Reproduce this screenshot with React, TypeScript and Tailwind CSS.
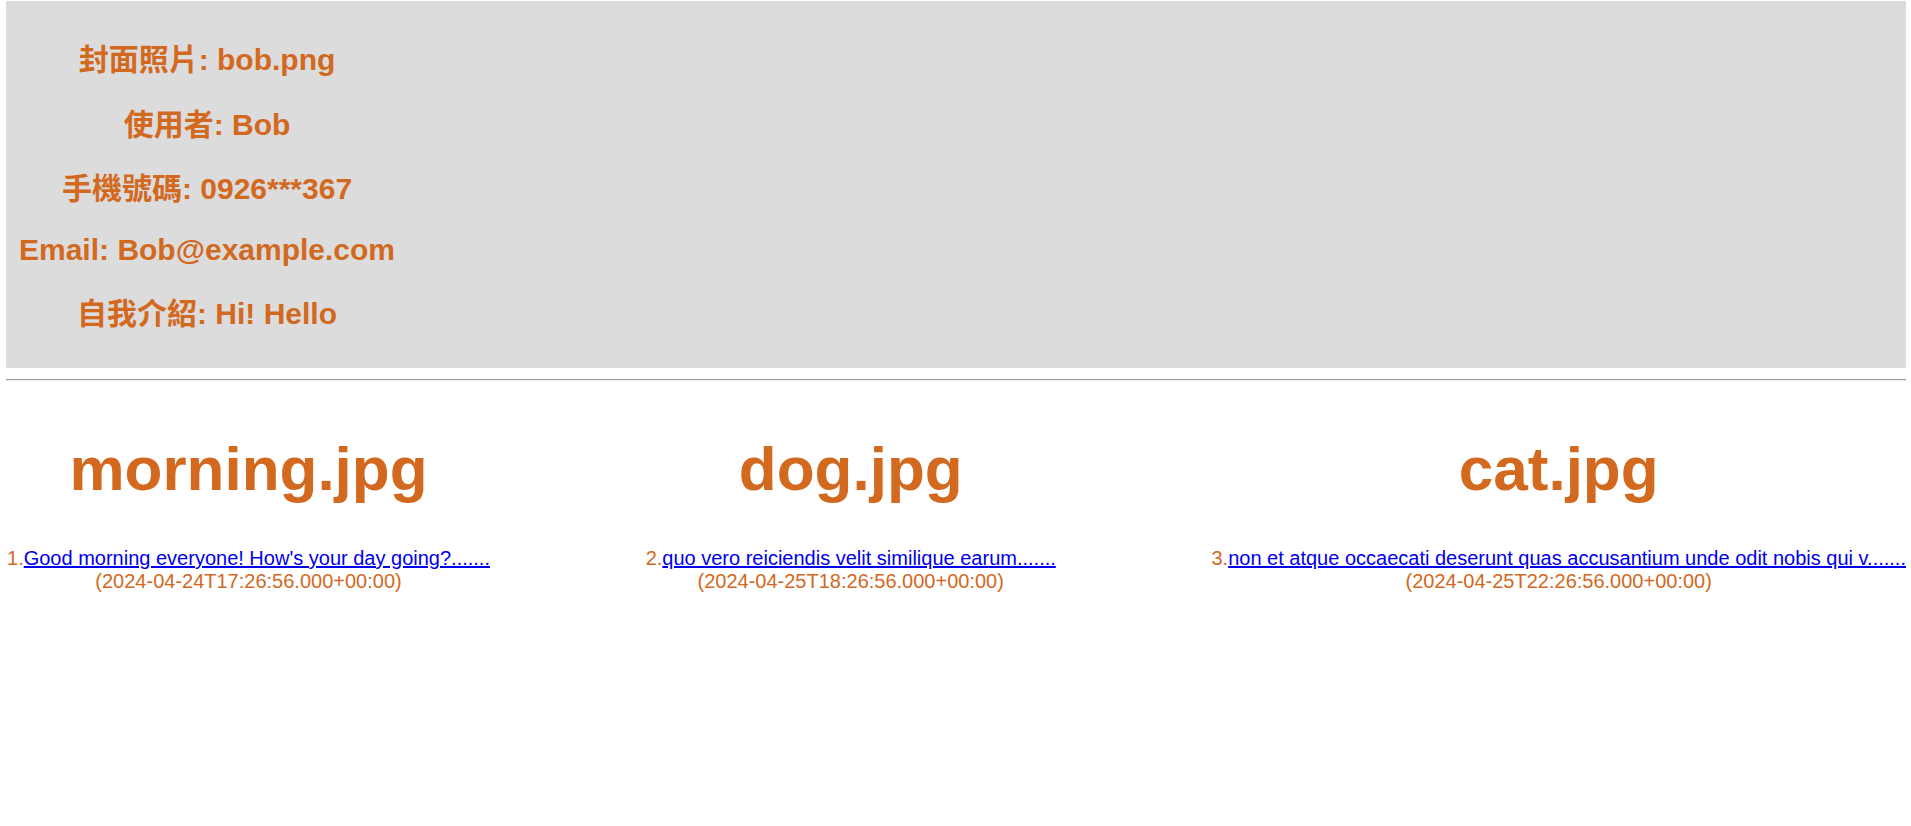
export default function App() {
  const profile = [
    { label: "封面照片", value: "bob.png", space: "" },
    { label: "使用者", value: "Bob", space: "mt-[31px]" },
    { label: "手機號碼", value: "0926***367", space: "mt-[30px]" },
    { label: "Email", value: "Bob@example.com", space: "mt-[27px]" },
    { label: "自我介紹", value: "Hi! Hello", space: "mt-[30px]" },
  ];

  const posts = [
    {
      img: "morning.jpg",
      text: "Good morning everyone! How's your day going?.......",
      time: "(2024-04-24T17:26:56.000+00:00)",
    },
    {
      img: "dog.jpg",
      text: "quo vero reiciendis velit similique earum.......",
      time: "(2024-04-25T18:26:56.000+00:00)",
    },
    {
      img: "cat.jpg",
      text: "non et atque occaecati deserunt quas accusantium unde odit nobis qui v.......",
      time: "(2024-04-25T22:26:56.000+00:00)",
    },
  ];

  return (
    <div className="min-h-screen bg-white font-['Liberation_Sans','Noto_Sans_CJK_TC',sans-serif] text-[#d2691e]">
      <div className="mt-px ml-[6px] mr-[5px] bg-[#dcdcdc] pt-[42px] pb-[37px]">
        <div className="flex w-fit flex-col items-center px-[13px] text-[30px] font-bold leading-[34px]">
          {profile.map((row, i) => (
            <div key={i} className={`h-[34px] whitespace-nowrap ${row.space}`}>
              {row.label}: {row.value}
            </div>
          ))}
        </div>
      </div>

      <div className="mt-[11px] ml-[6px] mr-[5px] h-0 border-t border-b border-t-[#9a9a9a] border-b-[#eeeeee]"></div>

      <div className="mt-[52px] ml-[7px] mr-[5px] flex justify-between">
        {posts.map((post, i) => (
          <div key={i} className="flex flex-col items-center text-center">
            <h1 className="text-[62px] font-bold leading-[72px]">{post.img}</h1>
            <div className="mt-[42px] whitespace-nowrap text-[20px] leading-[23px]">
              {i + 1}.
              <a href="#" className="text-[#0000ee] underline">
                {post.text}
              </a>
            </div>
            <div className="text-[20px] leading-[23px]">{post.time}</div>
          </div>
        ))}
      </div>
    </div>
  );
}
